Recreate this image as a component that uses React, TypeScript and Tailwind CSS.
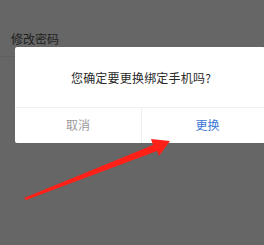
import React from "react";

export default function App() {
  return (
    <div
      className="relative w-[264px] h-[245px] overflow-hidden bg-[#666666]"
      style={{ fontFamily: '"Noto Sans CJK SC", "Noto Sans", sans-serif' }}
    >
      <div className="h-[57px] border-b border-[#5f5f5f] flex items-end pb-[10px] pl-[11px]">
        <span className="text-[12px] leading-[14px] text-[#1f1f1f]">修改密码</span>
      </div>

      {/* dialog */}
      <div className="absolute left-[15px] top-[47px] w-[250px] h-[96px] bg-white rounded-[2px] flex flex-col">
        <div className="h-[60px] flex items-center justify-center pt-[1px] pl-[2px]">
          <span className="text-[12px] leading-[14px] text-[#2a2a2a] tracking-[0.2px]">
            您确定要更换绑定手机吗?
          </span>
        </div>
        <div className="flex-1 flex border-t border-[#f0f0f0]">
          <button className="w-[127px] border-r border-[#f0f0f0] flex items-center justify-center pb-[2px] text-[12px] text-[#9a9a9a]">
            取消
          </button>
          <button className="flex-1 flex items-center justify-center pl-[8px] pb-[2px] text-[12px] text-[#3b78d6]">
            更换
          </button>
        </div>
      </div>

      {/* red arrow */}
      <svg className="absolute left-0 top-0" width="264" height="245" viewBox="0 0 264 245">
        <polygon
          points="24,198 153,145 151,139 170,141 159,156 157,151 26,200"
          fill="#ff2118"
        />
      </svg>
    </div>
  );
}
